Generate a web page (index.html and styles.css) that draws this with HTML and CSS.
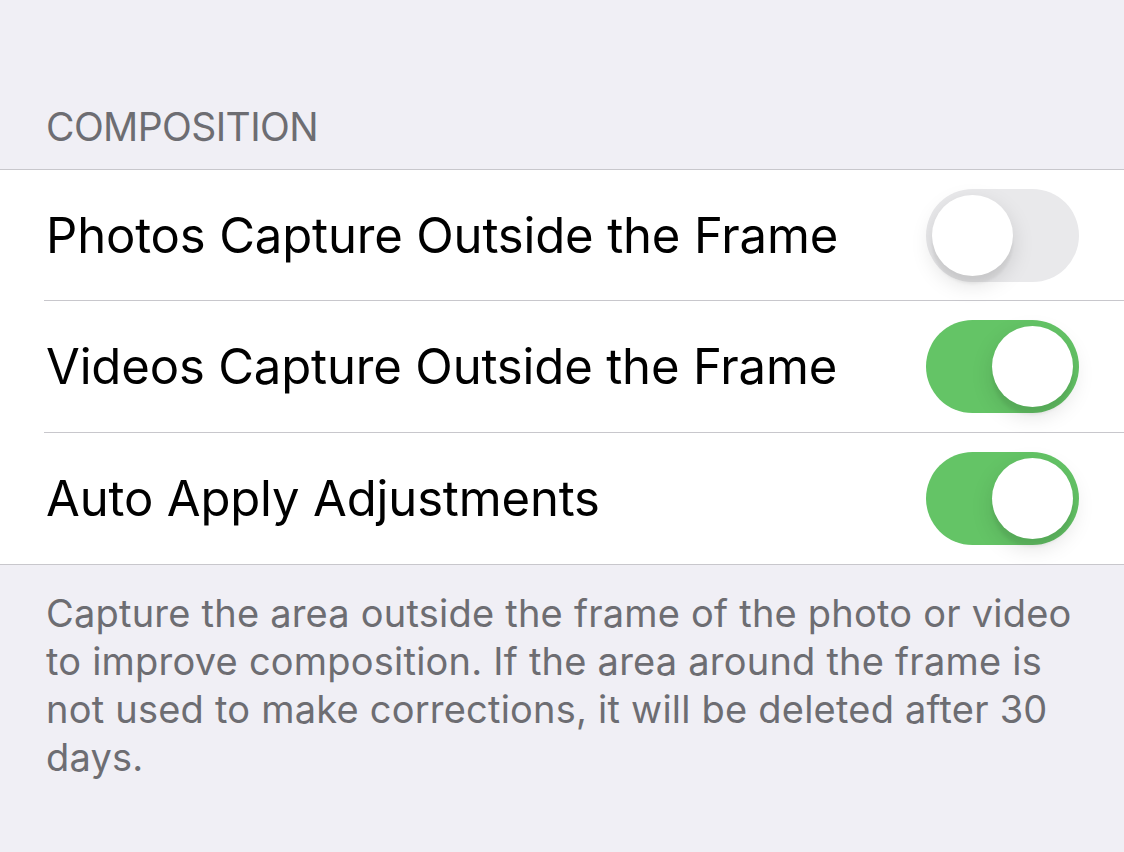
FILE: index.html
```html
<!DOCTYPE html>
<html lang="en">
<head>
    <meta charset="UTF-8">
    <meta name="viewport" content="width=device-width, initial-scale=1.0">
    <title>Camera Settings</title>
    <link rel="stylesheet" href="styles.css">
</head>
<body>

    <!-- Section header -->
    <div class="section-header">COMPOSITION</div>

    <!-- Toggle group -->
    <div class="group">
        <div class="row">
            <span class="label">Photos Capture Outside the Frame</span>
            <div class="switch"><div class="knob"></div></div>
        </div>
        <div class="row">
            <span class="label">Videos Capture Outside the Frame</span>
            <div class="switch on"><div class="knob"></div></div>
        </div>
        <div class="row">
            <span class="label">Auto Apply Adjustments</span>
            <div class="switch on"><div class="knob"></div></div>
        </div>
    </div>

    <!-- Footer note -->
    <p class="section-footer">Capture the area outside the frame of the photo or video to improve composition. If the area around the frame is not used to make corrections, it will be deleted after 30 days.</p>

</body>
</html>
```

FILE: styles.css
```css
/* Reset */
* {
    margin: 0;
    padding: 0;
    box-sizing: border-box;
}

body {
    font-family: 'Inter', 'Roboto', sans-serif;
    background-color: #f0eff5;
    color: #000;
    height: 852px;
    overflow: hidden;
}

/* Header */
.section-header {
    height: 169px;
    display: flex;
    align-items: flex-end;
    padding: 0 46px 19px;
    font-size: 39px;
    color: #6d6d72;
    letter-spacing: -0.6px;
}

/* Group */
.group {
    background: #fff;
    border-top: 1px solid #c8c7cc;
    border-bottom: 1px solid #c8c7cc;
}

.row {
    height: 131px;
    margin-left: 44px;
    padding: 0 45px 0 2px;
    display: flex;
    align-items: center;
    justify-content: space-between;
    border-bottom: 1px solid #c8c7cc;
}

.row:nth-child(2) {
    height: 132px;
}

.row:last-child {
    border-bottom: none;
}

.label {
    font-size: 49px;
    letter-spacing: -0.15px;
}

/* Switch */
.switch {
    width: 153px;
    height: 93px;
    border-radius: 47px;
    background: #e9e9eb;
    padding: 6px;
    display: flex;
    justify-content: flex-start;
}

.switch.on {
    background: #64c466;
    justify-content: flex-end;
}

.knob {
    width: 81px;
    height: 81px;
    border-radius: 50%;
    background: #fff;
    box-shadow: 0 8px 22px rgba(0, 0, 0, 0.13), 0 8px 3px rgba(0, 0, 0, 0.05);
}

/* Footer */
.section-footer {
    padding: 24px 40px 0 46px;
    font-size: 38px;
    line-height: 48px;
    letter-spacing: 0.22px;
    color: #6d6d72;
}
```
